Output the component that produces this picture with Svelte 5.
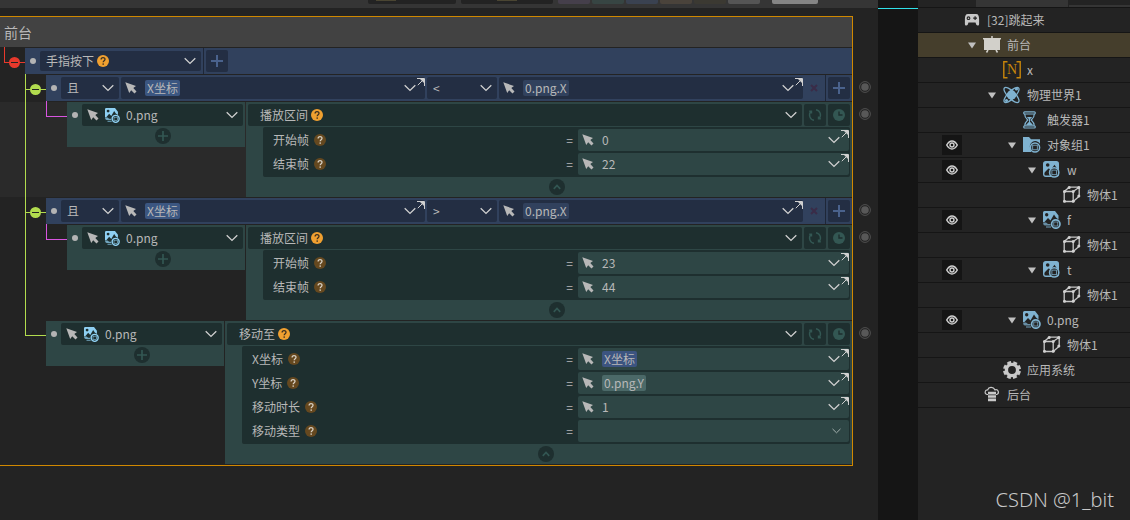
<script>
  const swatches = ["violet", "teal", "blue", "brown", "olive", "grey"];

  const rows = [
    { kind: "condition", op: "<", left: "X坐标", right: "0.png.X" },
    {
      kind: "action",
      nested: true,
      striped: true,
      object: "0.png",
      action: "播放区间",
      params: [
        { label: "开始帧", value: "0" },
        { label: "结束帧", value: "22" },
      ],
    },
    { kind: "condition", op: ">", left: "X坐标", right: "0.png.X" },
    {
      kind: "action",
      nested: true,
      object: "0.png",
      action: "播放区间",
      params: [
        { label: "开始帧", value: "23" },
        { label: "结束帧", value: "44" },
      ],
    },
    {
      kind: "action",
      nested: false,
      object: "0.png",
      action: "移动至",
      params: [
        { label: "X坐标", tag: "X坐标", tone: "variable" },
        { label: "Y坐标", tag: "0.png.Y", tone: "property" },
        { label: "移动时长", value: "1" },
        { label: "移动类型", choice: true },
      ],
    },
  ];

  const tree = [
    { depth: 0, icon: "gamepad", label: "[32]跳起来" },
    { depth: 1, icon: "stage", label: "前台", open: true, selected: true },
    { depth: 2, icon: "number", label: "x" },
    { depth: 2, icon: "physics", label: "物理世界1", open: true },
    { depth: 3, icon: "hourglass", label: "触发器1" },
    { depth: 3, icon: "folder", label: "对象组1", open: true, eye: true },
    { depth: 4, icon: "image", label: "w", open: true, eye: true },
    { depth: 5, icon: "cube", label: "物体1" },
    { depth: 4, icon: "sprite", label: "f", open: true, eye: true },
    { depth: 5, icon: "cube", label: "物体1" },
    { depth: 4, icon: "image", label: "t", open: true, eye: true },
    { depth: 5, icon: "cube", label: "物体1" },
    { depth: 3, icon: "sprite", label: "0.png", open: true, eye: true },
    { depth: 4, icon: "cube", label: "物体1" },
    { depth: 2, icon: "gear", label: "应用系统" },
    { depth: 1, icon: "server", label: "后台" },
  ];
</script>

{#snippet chevron(small = false)}
  <svg class="chevron" class:small viewBox="0 0 12 8" aria-hidden="true">
    <path d="M.7 1.2 6 6.4l5.3-5.2" fill="none" stroke="currentColor" stroke-width="1.3" />
  </svg>
{/snippet}

{#snippet cursor()}
  <svg class="cursor" viewBox="0 0 12 12" aria-hidden="true">
    <path d="M.3.3 11 3.900 8.300 6.100l3.200 3.400-2 2L6.200 8.200 4.200 11Z" fill="#b8b8b8" />
  </svg>
{/snippet}

{#snippet help(dim = false)}
  <svg class="help" class:dim viewBox="0 0 12 12" role="img" aria-label="帮助">
    <circle cx="6" cy="6" r="6" />
    <path d="M4.100 4.500c0-2.600 3.900-2.500 3.900-.2C8 5.700 6.200 5.700 6.200 7.300" />
    <rect x="5.500" y="8.400" width="1.400" height="1.400" />
  </svg>
{/snippet}

{#snippet plus()}
  <svg class="plus" viewBox="0 0 12 12" aria-hidden="true">
    <path d="M6 0v12M0 6h12" stroke="currentColor" stroke-width="2" />
  </svg>
{/snippet}

{#snippet sprite(color)}
  <path
    fill={color}
    fill-rule="evenodd"
    d="M1.500 0H12l3.500 4.500V8.500L13 6.500 11 3.500 7.500 9.500 5 7 1.500 11H0V1.500Q0 0 1.500 0ZM3.700 2a1.700 1.700 0 1 0 0 3.400A1.700 1.700 0 0 0 3.700 2Z"
  />
  <path d="M0 11.500h3l2 1.500h2.500v1.500H2Q0 14 0 11.500Z" fill={color} opacity=".75" />
  <path d="M3 16h5" stroke={color} stroke-width="1.500" opacity=".6" />
  <circle cx="12.800" cy="13" r="4.200" fill="none" stroke={color} stroke-width="1.700" />
  <rect x="10.800" y="11" width="4" height="4" fill="none" stroke={color} stroke-width=".7" />
{/snippet}

{#snippet treeIcon(name)}
  <svg class="tree-icon" viewBox="0 0 18 18" aria-hidden="true">
    {#if name === "gamepad"}
      <path
        fill="#c8c8c8"
        fill-rule="evenodd"
        d="M5 3h8c2.500 0 3 2 3.100 5v5c0 2-2 2-2.800.8L12.500 11.500h-7l-.8 2.300c-.8 1.200-2.800 1.200-2.800-.8V8C2 5 2.500 3 5 3Zm.5 2.300a1.900 1.900 0 1 0 0 3.800 1.900 1.900 0 0 0 0-3.800Zm6-.1v1.300h-1.300v1.200h1.300V9h1.200V7.700H14V6.500h-1.300V5.200Z"
      />
      <circle cx="5.500" cy="7.200" r=".8" fill="#c8c8c8" />
    {:else if name === "stage"}
      <path d="M0 2h18v1.500h-1V14H1V3.500H0Z" fill="#d2d0ca" />
      <path d="M9 0v2M5 14l-1.500 2.500M13 14l1.500 2.500" stroke="#d2d0ca" stroke-width="1.500" />
    {:else if name === "number"}
      <path d="M4.500.8H.8v16h3.700M13.500.8h3.700v16h-3.700" fill="none" stroke="#c8860a" stroke-width="1.400" />
      <text x="9" y="13" text-anchor="middle">N</text>
    {:else if name === "physics"}
      <g fill="none" stroke="#7fb2d0" stroke-width="1.300">
        <ellipse cx="8.500" cy="9" rx="10" ry="3.600" transform="rotate(45 8.500 9)" />
        <ellipse cx="8.500" cy="9" rx="10" ry="3.600" transform="rotate(-45 8.500 9)" />
      </g>
      <circle cx="8.500" cy="9" r="4.700" fill="#7fb2d0" />
      <circle cx="13.500" cy="3" r="1.600" fill="#7fb2d0" />
      <circle cx="3.500" cy="14.500" r="1.600" fill="#7fb2d0" />
    {:else if name === "hourglass"}
      <g fill="none" stroke="#7fb2d0" stroke-width="1.200">
        <rect x=".7" y=".8" width="11.600" height="2.200" rx="1" />
        <rect x=".7" y="14.800" width="11.600" height="2.200" rx="1" />
        <path d="M1.700 3c0 3.700 1.700 4.500 3.200 6-1.500 1.500-3.200 2.300-3.200 5.800M11.300 3c0 3.700-1.700 4.500-3.200 6 1.500 1.500 3.200 2.300 3.200 5.800" />
      </g>
      <path d="M3.800 6h5.400L6.500 8.800ZM6.500 10.200l3.500 3.800H3Z" fill="#7fb2d0" />
      <path d="M6.500 8v4" stroke="#7fb2d0" />
    {:else if name === "folder"}
      <path d="M0 1h6l2 2.200h9v4.600a5.300 5.300 0 0 0-9.500 5.400l.8 2.800H0Z" fill="#7fb2d0" />
      <circle cx="12" cy="11.500" r="4.600" fill="#232323" stroke="#7fb2d0" stroke-width="1.500" />
      <rect x="9.700" y="9.200" width="4.600" height="4.600" fill="none" stroke="#7fb2d0" stroke-width=".8" />
    {:else if name === "image"}
      <rect x=".7" y=".7" width="14.600" height="14.600" rx="2" fill="#232323" stroke="#7fb2d0" stroke-width="1.400" />
      <path
        fill="#7fb2d0"
        fill-rule="evenodd"
        d="M1 1h14v8L11.500 3.800 8 8.500 5.500 7.500 1 12ZM4.700 2.200a1.800 1.800 0 1 0 0 3.600 1.800 1.800 0 0 0 0-3.600Z"
      />
      <circle cx="11.200" cy="11.400" r="4.600" fill="#232323" stroke="#7fb2d0" stroke-width="1.600" />
      <rect x="8.900" y="9.100" width="4.600" height="4.600" fill="none" stroke="#7fb2d0" stroke-width=".8" />
    {:else if name === "sprite"}
      {@render sprite("#7fb2d0")}
    {:else if name === "cube"}
      <path
        d="M1.200 5.500h9v10h-9ZM1.200 5.500l5-4.300h10v9l-6 5.300M10.200 5.500l6-4.300"
        fill="none"
        stroke="#c8c8c8"
        stroke-width="1.300"
      />
      <g fill="#d2d2d2">
        <circle cx="1.500" cy="5.500" r="1.500" />
        <circle cx="10.200" cy="5.500" r="1.500" />
        <circle cx="1.500" cy="15.200" r="1.500" />
        <circle cx="10.200" cy="15.200" r="1.500" />
        <circle cx="6.200" cy="1.500" r="1.500" />
        <circle cx="15.800" cy="1.500" r="1.500" />
        <circle cx="15.800" cy="10" r="1.500" />
      </g>
    {:else if name === "gear"}
      <circle cx="9" cy="9" r="5.600" fill="none" stroke="#c8c8c8" stroke-width="3.400" />
      <circle
        cx="9"
        cy="9"
        r="7.600"
        fill="none"
        stroke="#c8c8c8"
        stroke-width="2.800"
        stroke-dasharray="3.800 2.169"
        transform="rotate(8 9 9)"
      />
    {:else}
      <path
        d="M5 8.500H4.200a2.300 2.300 0 0 1 .5-4.600C5.500 1 10 .2 12 3.900a2.300 2.300 0 0 1 1.800 4.600H13"
        fill="none"
        stroke="#c8c8c8"
        stroke-width="1.200"
      />
      <path d="M5 5.800h8v2.600H5ZM5 9.200h8v2.600H5ZM5 12.600h8v2.600H5Z" fill="#c8c8c8" />
    {/if}
  </svg>
{/snippet}

{#snippet fieldTools()}
  <button class="bare" aria-label="展开">{@render chevron()}</button>
  <button class="bare corner" aria-label="编辑表达式">
    <svg viewBox="0 0 8 8" aria-hidden="true">
      <path d="M0 .5h7.500V8M6.500 1.500.800 7.200" fill="none" stroke="#d0d0d0" />
      <path d="M3 1h4.500v4.500Z" fill="#d0d0d0" />
    </svg>
  </button>
{/snippet}

{#snippet expression(tag, tone)}
  <div class="field grow source">
    <button class="bare pick" aria-label="选取对象">{@render cursor()}</button>
    <button class="tag {tone}">{tag}</button>
    <span class="fill"></span>
    {@render fieldTools()}
  </div>
{/snippet}

{#snippet rails(color, toggle)}
  <span class="rail elbow {color}">
    {#if toggle}
      <button class="toggle" aria-label="折叠"></button>
    {/if}
  </span>
{/snippet}

<div class="app">
  <main class="editor">
    <div class="toolbar">
      <span class="tool-box"></span>
      <span class="tool-box last"></span>
      {#each swatches as swatch}
        <span class="swatch {swatch}"></span>
      {/each}
      <span class="swatch wide"></span>
    </div>

    <div class="workspace">
      <section class="panel">
        <h1>前台</h1>

        <div class="row">
          {@render rails("red", true)}
          <div class="bar">
            <span class="dot"></span>
            <div class="field event">
              <select aria-label="事件">
                <option>手指按下</option>
                <option>手指松开</option>
              </select>
              {@render help()}
              <span class="fill"></span>
              {@render chevron()}
            </div>
            <span class="divider"></span>
            <button class="square" aria-label="添加条件">{@render plus()}</button>
          </div>
        </div>

        {#each rows as row, i}
          {#if row.kind === "condition"}
            <div class="row">
              <span class="rail"></span>
              {@render rails("green", true)}
              <div class="bar">
                <span class="dot"></span>
                <div class="field logic">
                  <select aria-label="逻辑">
                    <option>且</option>
                    <option>或</option>
                  </select>
                  <span class="fill"></span>
                  {@render chevron()}
                </div>
                {@render expression(row.left, "bright")}
                <div class="field operator">
                  <select aria-label="比较" value={row.op}>
                    <option value="<">&lt;</option>
                    <option value=">">&gt;</option>
                  </select>
                  <span class="fill"></span>
                  {@render chevron()}
                </div>
                {@render expression(row.right, "muted")}
                <button class="remove" aria-label="删除条件">
                  <svg viewBox="0 0 8 8" aria-hidden="true">
                    <path d="m1 1 6 6M7 1 1 7" stroke="#3a2c48" stroke-width="2" />
                  </svg>
                </button>
                <span class="divider tight"></span>
                <button class="square" aria-label="添加条件">{@render plus()}</button>
              </div>
            </div>
          {:else}
            <div class="row" class:striped={row.striped}>
              <span class="rail"></span>
              {#if row.nested}
                <span class="rail green through"></span>
                {@render rails("magenta", false)}
              {:else}
                {@render rails("green", false)}
              {/if}

              <div class="object green-block">
                <span class="dot"></span>
                <div class="object-body">
                  <div class="field">
                    <button class="bare pick" aria-label="选取对象">{@render cursor()}</button>
                    <svg class="sprite" viewBox="0 0 18 18" aria-hidden="true">{@render sprite("#8fd0f2")}</svg>
                    <select aria-label="对象">
                      <option>{row.object}</option>
                    </select>
                    <span class="fill"></span>
                    {@render chevron()}
                  </div>
                  <button class="round" aria-label="添加动作">{@render plus()}</button>
                </div>
              </div>

              <div class="action green-block">
                <div class="action-head">
                  <div class="field grow title">
                    <select aria-label="动作">
                      <option>{row.action}</option>
                    </select>
                    {@render help()}
                    <span class="fill"></span>
                    {@render chevron()}
                  </div>
                  <button class="square" aria-label="循环">
                    <svg class="glyph" viewBox="0 0 14 14" aria-hidden="true">
                      <path
                        d="M6 12.300A5.400 5.400 0 0 1 3 3.300M8 1.700a5.400 5.400 0 0 1 3 9M1.200 3.200h2.300v2.300M12.800 10.800h-2.300V8.500"
                        fill="none"
                        stroke="currentColor"
                        stroke-width="1.400"
                      />
                    </svg>
                  </button>
                  <button class="square" aria-label="延时">
                    <svg class="glyph" viewBox="0 0 14 14" aria-hidden="true">
                      <circle cx="7" cy="7" r="6" fill="currentColor" />
                      <path d="M7 3.500V7h3.500" fill="none" stroke="#1e2f2f" stroke-width="1.400" />
                    </svg>
                  </button>
                </div>
                <div class="action-body">
                  <div class="params">
                    {#each row.params as param, p}
                      <div class="param">
                        <label for="param-{i}-{p}">{param.label}</label>
                        {@render help(true)}
                        <span class="fill"></span>
                        <span class="equals">=</span>
                        <div class="field value source">
                          {#if param.choice}
                            <select id="param-{i}-{p}" class="grow">
                              <option></option>
                            </select>
                            {@render chevron(true)}
                          {:else}
                            <button class="bare pick" aria-label="选取对象">{@render cursor()}</button>
                            {#if param.tag}
                              <button id="param-{i}-{p}" class="tag {param.tone}">{param.tag}</button>
                              <span class="fill"></span>
                            {:else}
                              <input id="param-{i}-{p}" type="text" value={param.value} />
                            {/if}
                            {@render fieldTools()}
                          {/if}
                        </div>
                      </div>
                    {/each}
                  </div>
                  <button class="round" aria-label="收起">
                    <svg class="caret" viewBox="0 0 8 6" aria-hidden="true">
                      <path d="m.8 4.800 3.200-3.300 3.200 3.300" fill="none" stroke="currentColor" stroke-width="1.700" />
                    </svg>
                  </button>
                </div>
              </div>
            </div>
          {/if}
        {/each}
      </section>

      <div class="gutter">
        {#each rows as row}
          <span class="slot" class:tall={row.kind === "action"}>
            <svg viewBox="0 0 12 12" aria-hidden="true">
              <circle cx="6" cy="6" r="5.400" fill="none" stroke="#505050" />
              <circle cx="6" cy="6" r="3.800" fill="#585858" />
            </svg>
          </span>
        {/each}
      </div>
    </div>
  </main>

  <div class="splitter"></div>

  <aside class="tree">
    <div class="tree-tabs"><span></span><span></span><span></span></div>
    <ul>
      {#each tree as node}
        <li class:selected={node.selected}>
          {#if node.eye}
            <button class="eye" aria-label="显示">
              <svg viewBox="0 0 12 10" aria-hidden="true">
                <path
                  d="M.7 5Q3 1 6 1t5.300 4Q9 9 6 9T.7 5Z"
                  fill="none"
                  stroke="#d0d0d0"
                  stroke-width="1.500"
                />
                <circle cx="6" cy="5" r="2" fill="none" stroke="#d0d0d0" stroke-width="1.400" />
              </svg>
            </button>
          {:else}
            <span class="eye-space"></span>
          {/if}
          <span class="indent" style="width: {node.depth * 20}px">
            {#if node.open}
              <svg class="arrow" viewBox="0 0 8 7" aria-hidden="true"><path d="M0 .5h8L4 6.500Z" fill="#c0c0c0" /></svg>
            {/if}
          </span>
          {@render treeIcon(node.icon)}
          <span>{node.label}</span>
        </li>
      {/each}
    </ul>
  </aside>

  <div class="watermark">CSDN @1_bit</div>
</div>

<style>
  :global(body) {
    background: #151515;
  }

  .app {
    position: relative;
    display: flex;
    min-height: 100vh;
    overflow: hidden;
    color: #b8b8b8;
    font-family: "Noto Sans CJK SC", sans-serif;
    font-size: 12px;
    line-height: 16px;
  }

  button,
  select,
  input {
    margin: 0;
    padding: 0;
    border: 0;
    background: none;
    color: inherit;
    font: inherit;
    appearance: none;
  }

  svg {
    display: block;
    flex: none;
  }

  .editor {
    flex: 1;
    min-width: 0;
    background: #232323;
  }

  .toolbar {
    display: flex;
    gap: 2px;
    height: 8px;
    padding-left: 368px;
    background: #353535;
  }

  .tool-box {
    width: 88px;
    height: 4px;
    margin-right: 3px;
    border-radius: 0 0 2px 2px;
    background: linear-gradient(#4a4532, #4a4532) 8px 0 / 20px 1px no-repeat #232323;
  }

  .tool-box.last {
    width: 92px;
    background-position: 36px 0;
  }

  .swatch {
    width: 32px;
    height: 4px;
    border-radius: 0 0 2px 2px;
  }

  .violet {
    background: #453f4b;
  }

  .teal {
    background: #374543;
  }

  .blue {
    background: #3a4251;
  }

  .brown {
    background: #4a433b;
  }

  .olive {
    background: #3b3932;
  }

  .grey {
    background: #555555;
  }

  .wide {
    width: 46px;
    margin-left: 10px;
    background: #858585;
  }

  .workspace {
    display: flex;
    padding-top: 8px;
  }

  .panel {
    display: flex;
    flex: 1;
    flex-direction: column;
    gap: 1px;
    min-width: 0;
    padding-bottom: 1px;
    border: 1px solid #d08800;
    border-left: 0;
  }

  h1 {
    margin: 0;
    padding: 0 4px;
    background: #424242;
    font-size: 14px;
    font-weight: 400;
    line-height: 30px;
  }

  .row {
    display: flex;
    padding-left: 4px;
  }

  .striped {
    background: #2a2a2a;
  }

  .rail {
    position: relative;
    flex: none;
    width: 21px;
  }

  .elbow::before,
  .elbow::after,
  .through::before {
    content: "";
    position: absolute;
    left: 0;
    background: currentColor;
  }

  .elbow::before {
    top: -1px;
    width: 1px;
    height: 16px;
  }

  .elbow::after {
    top: 14px;
    width: 100%;
    height: 1px;
  }

  .through::before {
    top: -13px;
    bottom: 0;
    width: 1px;
  }

  .red {
    color: #e8392c;
  }

  .green {
    color: #b2dc4e;
  }

  .magenta {
    color: #d855e0;
  }

  .toggle {
    position: absolute;
    z-index: 1;
    top: 9px;
    left: 5px;
    width: 11px;
    height: 11px;
    border-radius: 50%;
    background: linear-gradient(#232323, #232323) center / 7px 1px no-repeat currentColor;
  }

  .red .toggle {
    background-color: #e8392c;
  }

  .green .toggle {
    background-color: #b2dc4e;
  }

  .bar {
    display: flex;
    flex: 1;
    gap: 2px;
    align-items: center;
    min-width: 0;
    height: 26px;
    padding-right: 2px;
    background: #31415d;
  }

  .dot {
    flex: none;
    width: 6px;
    height: 6px;
    margin: 0 2px 0 5px;
    border-radius: 50%;
    background: #b4b4b4;
  }

  .fill,
  .grow {
    flex: 1;
    min-width: 0;
  }

  .field {
    display: flex;
    align-items: center;
    height: 22px;
    padding: 0 5px 0 6px;
    border-radius: 2px;
    background: #232e43;
  }

  .source {
    padding-left: 4px;
  }

  .event {
    width: 150px;
    height: 20px;
  }

  .logic {
    width: 47px;
  }

  .operator {
    width: 59px;
  }

  .divider {
    align-self: stretch;
    width: 1px;
    background: #1e2738;
  }

  .tight {
    margin-left: -2px;
  }

  .square {
    display: grid;
    flex: none;
    place-items: center;
    width: 22px;
    height: 22px;
    border-radius: 2px;
    background: #232e43;
    color: #4a628c;
  }

  .plus {
    width: 12px;
    height: 12px;
  }

  .remove {
    display: grid;
    place-items: center;
    width: 22px;
    height: 22px;
    margin-left: -2px;
  }

  .remove svg {
    width: 8px;
    height: 8px;
  }

  .chevron {
    width: 12px;
    height: 8px;
    color: #d0d0d0;
  }

  .chevron.small {
    width: 9px;
    height: 6px;
    margin-right: 3px;
    color: #a8b4b2;
  }

  .cursor {
    width: 12px;
    height: 12px;
  }

  .pick {
    width: 20px;
  }

  .object .pick {
    width: 18px;
  }

  .bare {
    flex: none;
  }

  .corner {
    align-self: flex-start;
    margin: 1px -5px 0 1px;
  }

  .corner svg {
    width: 8px;
    height: 8px;
  }

  .help {
    width: 12px;
    height: 12px;
    margin-left: 2px;
    fill: #f0a030;
  }

  .help path {
    fill: none;
    stroke: #3c3020;
    stroke-width: 1.3;
  }

  .help rect {
    fill: #3c3020;
  }

  .help.dim {
    margin-left: 5px;
    fill: #65481f;
  }

  .help.dim path {
    stroke: #d8d0c4;
  }

  .help.dim rect {
    fill: #d8d0c4;
  }

  .tag {
    height: 16px;
    padding: 0 2px;
    border-radius: 2px;
    white-space: nowrap;
  }

  .bright {
    background: #3b5681;
  }

  .muted {
    background: #31415d;
  }

  .variable {
    background: #3c5480;
  }

  .property {
    background: #4b6968;
  }

  .green-block {
    background: #2e4645;
  }

  .green-block .field,
  .green-block .square,
  .round {
    background: #1e2f2f;
  }

  .green-block .square,
  .round {
    color: #335753;
  }

  .object {
    display: flex;
    flex: none;
    align-self: flex-start;
    width: 178px;
    margin-right: 1px;
  }

  .object .dot {
    margin: 10px 4px 0 5px;
  }

  .object-body {
    display: flex;
    flex: 1;
    flex-direction: column;
    gap: 2px;
    padding: 2px 2px 3px 0;
  }

  .object .field {
    padding-left: 5px;
  }

  .sprite {
    width: 15px;
    height: 15px;
    margin-right: 6px;
  }

  .round {
    display: grid;
    align-self: center;
    place-items: center;
    width: 16px;
    height: 16px;
    border-radius: 50%;
  }

  .round .plus {
    width: 10px;
    height: 10px;
  }

  .caret {
    width: 8px;
    height: 6px;
  }

  .action {
    flex: 1;
    min-width: 0;
    padding: 2px 2px 2px 0;
  }

  .action-head {
    display: flex;
    gap: 2px;
    padding-left: 2px;
  }

  .title {
    padding-left: 12px;
  }

  .glyph {
    width: 14px;
    height: 14px;
  }

  .action-body {
    display: flex;
    flex-direction: column;
    gap: 2px;
    margin-top: 1px;
    padding-left: 17px;
  }

  .params {
    display: flex;
    flex-direction: column;
    gap: 2px;
    padding: 2px 1px 2px 10px;
    border-radius: 2px;
    background: #1e2f2f;
  }

  .param {
    display: flex;
    align-items: center;
  }

  .equals {
    margin-right: 5px;
  }

  .params .value {
    flex: none;
    width: 262px;
    background: #2e4645;
  }

  .value input {
    flex: 1;
    min-width: 0;
  }

  .gutter {
    display: flex;
    flex: none;
    flex-direction: column;
    width: 25px;
    padding-top: 59px;
  }

  .slot {
    height: 27px;
    padding: 6px 0 0 6px;
    box-sizing: border-box;
  }

  .slot.tall {
    height: 96px;
  }

  .slot svg {
    width: 12px;
    height: 12px;
  }

  .splitter {
    flex: none;
    width: 40px;
    margin-top: 8px;
    border-top: 1px solid #30e0e8;
  }

  .tree {
    flex: none;
    width: 212px;
    background: #232323;
  }

  .tree-tabs {
    display: grid;
    grid-template-columns: 57px 92px 1fr;
    gap: 1px;
    height: 7px;
    border-bottom: 1px solid #151515;
  }

  .tree-tabs span:nth-child(2) {
    background: #353535;
  }

  .tree-tabs span:nth-child(3) {
    border-bottom: 2px solid #353535;
  }

  ul {
    margin: 0;
    padding: 0;
    list-style: none;
  }

  li {
    display: flex;
    align-items: center;
    height: 24px;
    padding-left: 24px;
    border-bottom: 1px solid #151515;
    white-space: nowrap;
  }

  .selected {
    background: #453e2c;
  }

  .eye,
  .eye-space {
    flex: none;
    width: 20px;
    height: 20px;
  }

  .eye {
    display: grid;
    place-items: center;
    background: #151515;
  }

  .eye svg {
    width: 12px;
    height: 10px;
  }

  .indent {
    display: flex;
    flex: none;
    justify-content: flex-end;
  }

  .arrow {
    width: 8px;
    height: 7px;
    margin-right: 6px;
  }

  .tree-icon {
    width: 18px;
    height: 18px;
    margin: 0 6px 0 1px;
  }

  .tree-icon text {
    fill: #c8860a;
    font-family: "Liberation Serif", serif;
    font-size: 14px;
  }

  .watermark {
    position: absolute;
    right: 16px;
    bottom: 8px;
    color: #c8c8c8;
    font-family: "Noto Sans", sans-serif;
    font-size: 20px;
    font-weight: 300;
    line-height: 24px;
  }
</style>
